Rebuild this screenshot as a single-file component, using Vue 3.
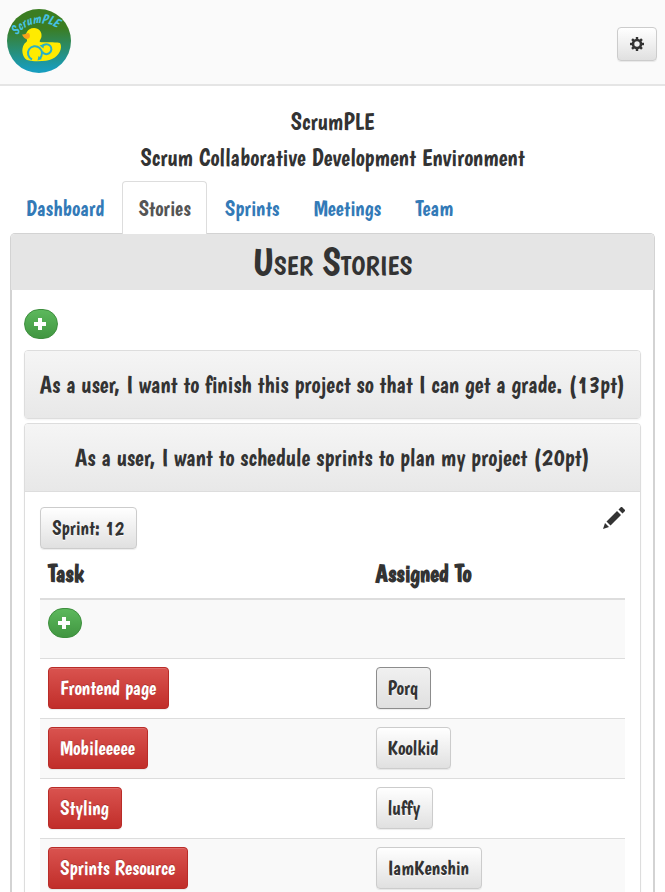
<script setup>
const tabs = ['Dashboard', 'Stories', 'Sprints', 'Meetings', 'Team']
const activeTab = 'Stories'

const stories = [
  { title: 'As a user, I want to finish this project so that I can get a grade. (13pt)', open: false },
  { title: 'As a user, I want to schedule sprints to plan my project (20pt)', open: true, sprint: 12 },
]

const tasks = [
  { name: 'Frontend page', owner: 'Porq', focused: true },
  { name: 'Mobileeeee', owner: 'Koolkid' },
  { name: 'Styling', owner: 'luffy' },
  { name: 'Sprints Resource', owner: 'IamKenshin' },
]
</script>

<template>
  <header class="navbar">
    <a class="brand" href="#" aria-label="ScrumPLE">
      <svg viewBox="0 0 64 64" width="64" height="64">
        <defs>
          <linearGradient id="sky" x1="0" y1="0" x2="0" y2="1">
            <stop offset="0.3" stop-color="#3b7d22" />
            <stop offset="0.95" stop-color="#179dbd" />
          </linearGradient>
          <path id="arc" d="M10 27 C14 19 24 14 33 14 C41 14 47 16 55 22" />
        </defs>
        <circle cx="32" cy="32" r="32" fill="url(#sky)" />
        <text class="logo-text"><textPath href="#arc">ScrumPLE</textPath></text>
        <path
          d="M27 19 C32 19 35 23 34.500 27 C34.500 30 32 31.500 33 33 C36 34 44 32.500 53 34 C56 39 52 47 45 50 C40 52.500 27 53 20 51 C15 48 14 40 17 35.500 C18 33.500 20.500 33 20 31 C17 26 20 19 27 19 Z"
          fill="#ffeb00"
        />
        <path d="M15 25.500 C18 26 19 24 21.500 24 C24 26 23 30 20 30 C18 30 16 28 15 25.500 Z" fill="#f9a21a" />
        <g fill="none" stroke="#2bb0c4" stroke-width="2">
          <path d="M25 50.500 A7 7 0 1 1 32.500 49.500" />
          <path d="M35.500 37 A5 5 0 1 1 35 42.500" />
        </g>
        <path d="M30.500 51.500 L31.500 47 L35 50 Z M32.500 36.500 L37 35 L36.500 39.500 Z" fill="#2bb0c4" />
      </svg>
    </a>
    <button class="btn btn-settings" type="button" aria-label="Settings">
      <svg viewBox="0 0 14 14" width="14" height="14">
        <g fill="#333">
          <rect v-for="a in [0, 45, 90, 135]" :key="a" x="5.800" y="0" width="2.400" height="14" :transform="`rotate(${a} 7 7)`" />
          <circle cx="7" cy="7" r="5.300" />
        </g>
        <circle cx="7" cy="7" r="2.700" fill="#f1f1f1" />
      </svg>
    </button>
  </header>

  <main class="page">
    <h1 class="title">ScrumPLE</h1>
    <h2 class="title">Scrum Collaborative Development Environment</h2>

    <nav class="tabs">
      <a v-for="tab in tabs" :key="tab" href="#" class="tab" :class="{ active: tab === activeTab }">{{ tab }}</a>
    </nav>

    <section class="board">
      <h2 class="board-title">User Stories</h2>
      <div class="board-body">
        <button class="btn-add" type="button" aria-label="Add story">
          <svg viewBox="0 0 12 12" width="12" height="12"><path d="M4 0h4v4h4v4H8v4H4V8H0V4h4z" fill="#fff" /></svg>
        </button>

        <article v-for="story in stories" :key="story.title" class="story">
          <h3 class="story-title"><a href="#">{{ story.title }}</a></h3>
          <div v-if="story.open" class="story-body">
            <div class="story-tools">
              <button class="btn" type="button">Sprint: {{ story.sprint }}</button>
              <button class="btn-edit" type="button" aria-label="Edit story">
                <svg viewBox="0 0 22 22" width="22" height="22">
                  <path d="M0 22 L2 16 L6 20 Z M3.500 14.500 L14 4 L18 8 L7.500 18.500 Z M15.500 2.500 L18 0 H19 L22 3 V4 L19.500 6.500 Z" fill="#333" />
                </svg>
              </button>
            </div>
            <table class="tasks">
              <thead>
                <tr><th scope="col">Task</th><th scope="col">Assigned To</th></tr>
              </thead>
              <tbody>
                <tr class="add-row">
                  <td>
                    <button class="btn-add" type="button" aria-label="Add task">
                      <svg viewBox="0 0 12 12" width="12" height="12"><path d="M4 0h4v4h4v4H8v4H4V8H0V4h4z" fill="#fff" /></svg>
                    </button>
                  </td>
                  <td></td>
                </tr>
                <tr v-for="task in tasks" :key="task.name">
                  <td><button class="btn btn-danger" type="button">{{ task.name }}</button></td>
                  <td><button class="btn" :class="{ focused: task.focused }" type="button">{{ task.owner }}</button></td>
                </tr>
              </tbody>
            </table>
          </div>
        </article>
      </div>
    </section>
  </main>
</template>

<style>
html {
  scrollbar-width: none;
}
body {
  background: #fff;
}
#app {
  color: #333;
  font-family: Boogaloo, "Liberation Sans Narrow", "DejaVu Sans Condensed", sans-serif;
  font-size: 22px;
}
</style>

<style scoped>
* {
  box-sizing: border-box;
}
button {
  font: inherit;
  color: inherit;
  cursor: pointer;
}
a {
  text-decoration: none;
}
svg {
  display: block;
}
.navbar {
  display: flex;
  justify-content: space-between;
  align-items: center;
  height: 86px;
  padding: 0 8px 0 7px;
  background: #fafafa;
  border-bottom: 2px solid #e5e5e5;
}
.brand {
  margin-bottom: 2px;
}
.logo-text {
  fill: #46c3e6;
  font-size: 13px;
  font-style: italic;
}
.btn {
  height: 42px;
  padding: 0 12px 0 11px;
  border: 1px solid #ccc;
  border-radius: 4px;
  background: linear-gradient(#fff, #e0e0e0);
  box-shadow: inset 0 1px 0 rgba(255, 255, 255, 0.15), 0 1px 1px rgba(0, 0, 0, 0.075);
  font-size: 20px;
  line-height: 28px;
  text-shadow: 0 1px 0 #fff;
}
.btn-settings {
  height: 34px;
  padding: 0 12px;
  margin-top: 4px;
}
.btn-danger {
  border-color: #b92c28;
  background: linear-gradient(#d9534f, #c12e2a);
  color: #fff;
  text-shadow: 0 -1px 0 rgba(0, 0, 0, 0.2);
}
.btn.focused {
  border-color: #8c8c8c;
  background: linear-gradient(#f0f0f0, #e0e0e0);
}
.btn-add {
  display: flex;
  align-items: center;
  width: 34px;
  height: 30px;
  padding: 0 9px;
  border: 1px solid #3e8f3e;
  border-radius: 15px;
  background: linear-gradient(#5cb85c, #419641);
}
.btn-edit {
  padding: 0;
  border: 0;
  background: none;
}
.page {
  padding: 18px 10px 0;
}
.title {
  margin: 0;
  font-size: 24px;
  font-weight: 400;
  line-height: 36px;
  text-align: center;
}
.tabs {
  display: flex;
  gap: 2px;
  margin-top: 5px;
}
.tab {
  padding: 11px 15px 9px;
  border: 1px solid transparent;
  border-bottom: 0;
  border-radius: 4px 4px 0 0;
  color: #337ab7;
  line-height: 31px;
}
.tab.active {
  position: relative;
  margin-bottom: -1px;
  border-color: #ddd;
  background: #fff;
  color: #555;
}
.board {
  border: 1px solid #d3d3d3;
  border-radius: 5px 5px 0 0;
  border-bottom: 0;
}
.board-title {
  margin: 0;
  border-radius: 4px 4px 0 0;
  background: #e5e5e5;
  font-size: 39px;
  font-weight: 400;
  font-variant: small-caps;
  line-height: 56px;
  text-align: center;
}
.board-body {
  padding: 19px 12px 0;
  border: solid #d3d3d3;
  border-width: 0 1px;
}
.story {
  margin-top: 4px;
  border: 1px solid #ddd;
  border-radius: 4px;
  box-shadow: 0 1px 2px rgba(0, 0, 0, 0.05);
}
.btn-add + .story {
  margin-top: 11px;
}
.story-title {
  margin: 0;
  padding: 10px 12px;
  border-radius: 3px 3px 0 0;
  background: linear-gradient(#f5f5f5, #e8e8e8);
  font-size: 24px;
  font-weight: 400;
  line-height: 47px;
  text-align: center;
}
.story-title a {
  color: inherit;
}
.story-body {
  padding: 15px 15px 0;
  border-top: 1px solid #ddd;
}
.story-tools {
  display: flex;
  justify-content: space-between;
  align-items: flex-start;
}
.tasks {
  width: 100%;
  border-collapse: collapse;
  table-layout: fixed;
}
th {
  height: 50px;
  padding: 0 8px;
  border-bottom: 2px solid #ddd;
  font-size: 24px;
  text-align: left;
}
th:first-child {
  width: 56%;
}
td {
  height: 60px;
  padding: 8px;
  border-top: 1px solid #ddd;
  vertical-align: top;
}
.add-row td {
  height: 59px;
}
tbody tr:nth-child(odd) {
  background: #f9f9f9;
}
</style>
